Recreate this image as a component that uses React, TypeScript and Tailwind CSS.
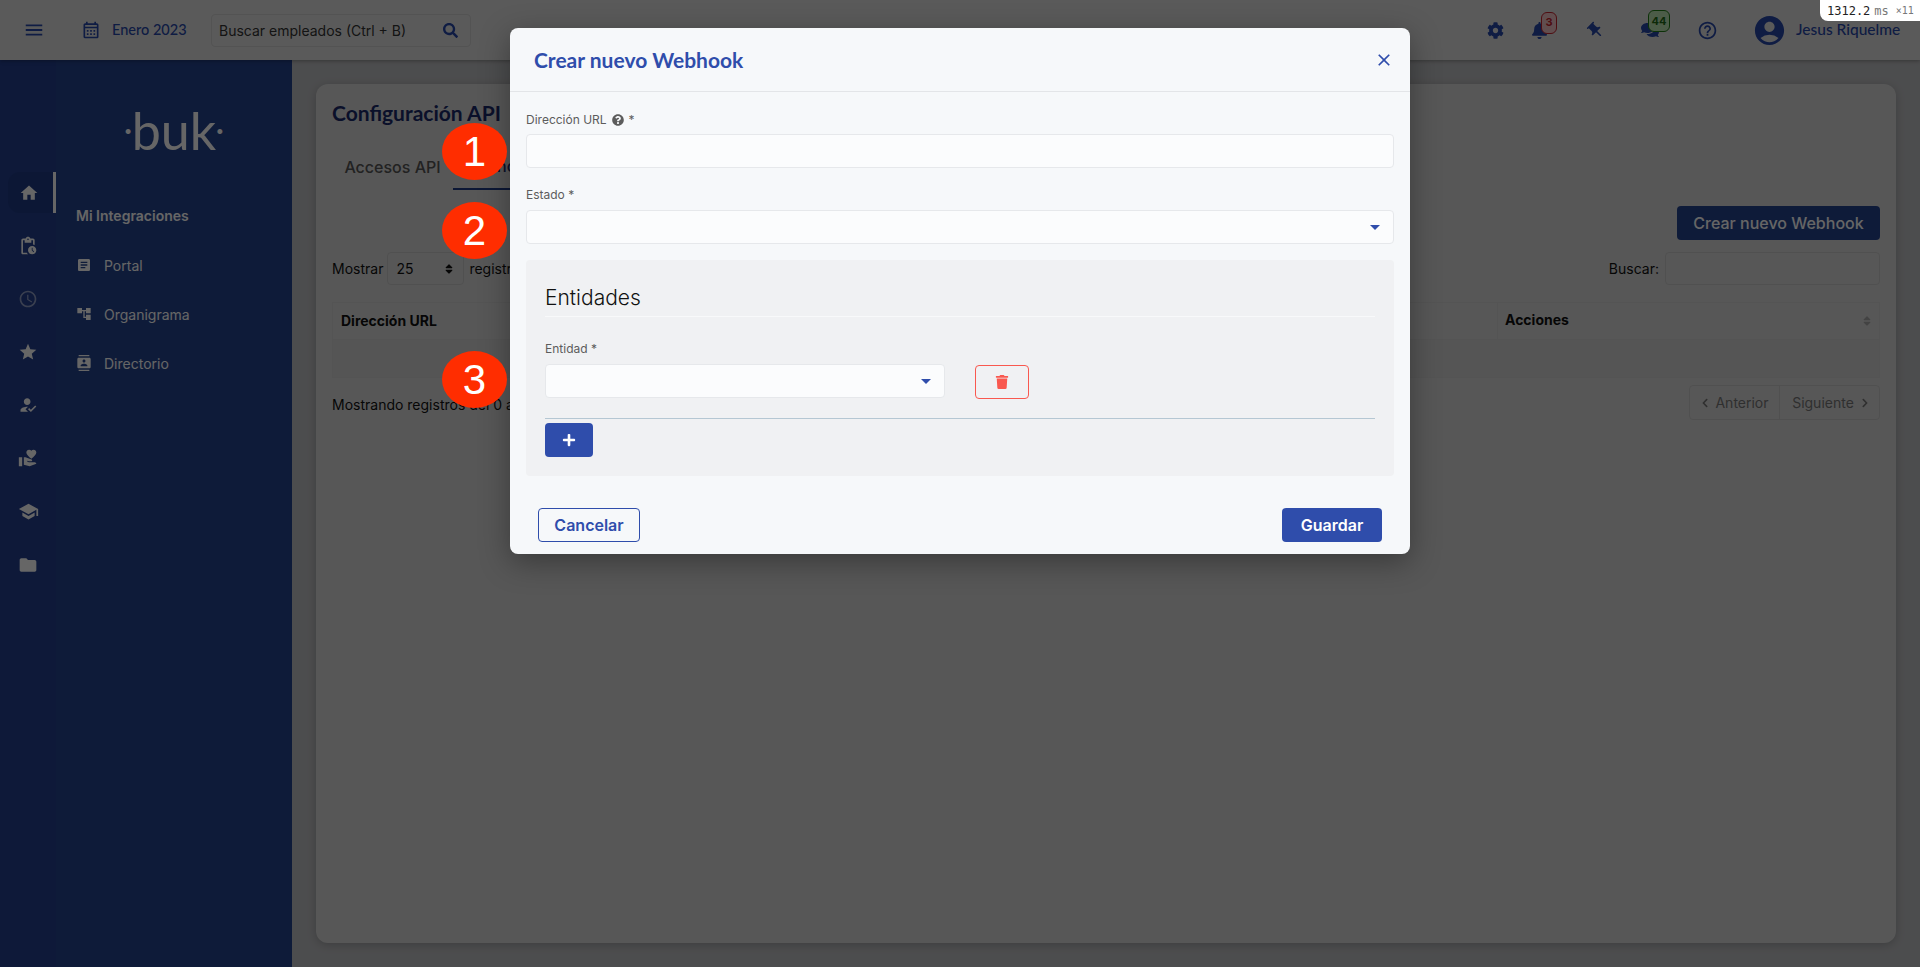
import {
  MdMenu,
  MdOutlineCalendarMonth,
  MdHome,
  MdOutlinePendingActions,
  MdOutlineAccessTime,
  MdStar,
  MdHowToReg,
  MdVolunteerActivism,
  MdSchool,
  MdFolder,
  MdArticle,
  MdAccountTree,
  MdContacts,
  MdPushPin,
  MdOutlineHelpOutline,
  MdAccountCircle,
  MdClose,
} from "react-icons/md";
import {
  FaBell,
  FaChevronLeft,
  FaChevronRight,
  FaCog,
  FaComments,
  FaPlus,
  FaQuestionCircle,
  FaSearch,
  FaSort,
  FaTrash,
} from "react-icons/fa";

const heading = "font-['Lato',sans-serif]";

function Caret() {
  return <span className="h-0 w-0 border-x-[5px] border-t-[5px] border-x-transparent border-t-[#2f4dab]" />;
}

function SelectBox({ className }: { className: string }) {
  return (
    <div className={`flex items-center justify-end rounded border border-[#e6e8eb] bg-[#fbfcfd] pr-[13px] ${className}`}>
      <Caret />
    </div>
  );
}

function Callout({ n, className }: { n: number; className: string }) {
  return (
    <div
      className={`absolute left-[442px] z-30 flex h-[57px] w-[65px] items-center justify-center rounded-[50%] bg-[#ff2d00] font-['Liberation_Sans',sans-serif] text-[42px] text-white ${className}`}
    >
      {n}
    </div>
  );
}

const railIcons = [
  { icon: MdOutlinePendingActions, size: 20, dim: false },
  { icon: MdOutlineAccessTime, size: 20, dim: true },
  { icon: MdStar, size: 20, dim: false },
  { icon: MdHowToReg, size: 20, dim: false },
  { icon: MdVolunteerActivism, size: 20, dim: false },
  { icon: MdSchool, size: 21, dim: false },
  { icon: MdFolder, size: 20, dim: false },
];

const menuItems = [
  { label: "Portal", icon: MdArticle },
  { label: "Organigrama", icon: MdAccountTree },
  { label: "Directorio", icon: MdContacts },
];

export default function App() {
  return (
    <div className="relative flex h-[967px] w-[1920px] flex-col overflow-hidden bg-[#bfc0c3] font-['Inter',sans-serif]">
      {/* top bar */}
      <header className="z-10 flex h-[60px] shrink-0 items-center bg-[#e2e2e2] text-[#2747a8] shadow-[0_1px_4px_rgba(0,0,0,0.3)]">
        <MdMenu size={22} className="ml-[23px]" />
        <MdOutlineCalendarMonth size={20} className="ml-[36px]" />
        <span className={`ml-[11px] w-[75px] whitespace-nowrap text-[14.5px] font-medium ${heading}`}>Enero 2023</span>
        <div className="ml-[24px] flex h-[33px] w-[260px] items-center justify-between rounded border border-[#cfcfcf] pl-[7px] pr-3">
          <span className="text-[14px] text-[#333]">Buscar empleados (Ctrl + B)</span>
          <FaSearch size={15} />
        </div>
        <div className="ml-auto flex items-center pr-[20px]">
          <FaCog size={17} className="mr-[1px]" />
          <div className="relative ml-[26px]">
            <FaBell size={17} />
            <span className="absolute left-[10px] top-[-10px] flex h-[22px] w-[16px] items-center justify-center rounded-md border border-[#c3232d] bg-[#f3c3c6] text-[11px] font-bold text-[#c3232d]">
              3
            </span>
          </div>
          <MdPushPin size={19} className="ml-[38px] rotate-[-45deg]" />
          <div className="relative ml-[36px]">
            <FaComments size={18} />
            <span className="absolute left-[7px] top-[-11px] flex h-[22px] w-[22px] items-center justify-center rounded-md border border-[#1f7a14] bg-[#bfe5b5] text-[11px] font-bold text-[#1f6a14]">
              44
            </span>
          </div>
          <MdOutlineHelpOutline size={21} className="ml-[38px]" />
          <MdAccountCircle size={35} className="ml-[34px]" />
          <span className={`ml-[9px] w-[104px] whitespace-nowrap text-[15.5px] font-medium ${heading}`}>Jesus Riquelme</span>
        </div>
      </header>

      <div className="flex flex-1">
        {/* icon rail */}
        <nav className="flex w-[56px] shrink-0 flex-col items-center bg-[#233f8e] pt-[112px] text-white">
          <div className="relative flex h-[41px] w-[48px] items-center justify-center self-end rounded-l-xl border-r-[3px] border-white bg-[#1f3a85]">
            <MdHome size={20} className="mr-[3px] mt-[1px]" />
          </div>
          <div className="mt-[23px] flex flex-col gap-[33px]">
            {railIcons.map((item, i) => (
              <item.icon key={i} size={item.size} className={item.dim ? "opacity-50" : ""} />
            ))}
          </div>
        </nav>

        {/* menu panel */}
        <aside className="w-[236px] shrink-0 bg-[#25448f] text-white">
          <div className="mt-[45px] flex h-[50px] items-center justify-center font-['Lato',sans-serif] text-[52px] font-normal leading-none">
            <span className="text-[26px] font-bold">·</span>
            buk
            <span className="text-[26px] font-bold">·</span>
          </div>
          <p className="ml-[20px] mt-[51px] text-[14px] font-semibold leading-[20px]">Mi Integraciones</p>
          <ul className="ml-[20px] mt-[28px] flex flex-col gap-[27px]">
            {menuItems.map((item) => (
              <li key={item.label} className="flex h-[22px] items-center gap-[12px] text-[14px]">
                <item.icon size={16} />
                {item.label}
              </li>
            ))}
          </ul>
        </aside>

        {/* main content */}
        <main className="flex flex-1 flex-col p-6">
          <section className="flex-1 rounded-xl bg-[#dadada] px-4 pt-[14px] text-[14px] text-[#111] shadow-[0_2px_10px_rgba(0,0,0,0.2)]">
            <h1 className={`text-[21px] font-bold leading-[30px] text-[#1a2a6a] ${heading}`}>Configuración API</h1>

            <div className="mt-[18px] flex h-[44px] text-[16px] font-medium">
              <div className="flex w-[121px] items-center justify-center pb-[2px] text-[#555]">Accesos API</div>
              <div className="flex w-[100px] items-center justify-center border-b-2 border-[#1f3a85] pb-[2px] text-[#1a2a6a]">
                Webhooks
              </div>
            </div>

            <div className="mt-4 flex justify-end">
              <button className="h-[34px] w-[203px] rounded bg-[#25448f] text-[16px] font-medium text-white">
                Crear nuevo Webhook
              </button>
            </div>

            <div className="mt-3 flex h-[33px] items-center">
              <span>Mostrar</span>
              <div className="ml-[4px] flex h-full w-[77px] items-center justify-between rounded border border-[#c8c8c8] pl-[8px] pr-[8px]">
                25
                <FaSort size={12} />
              </div>
              <span className="ml-[5px]">registros</span>
              <span className="ml-auto">Buscar:</span>
              <div className="ml-[6px] h-full w-[215px] rounded border border-[#c8c8c8]" />
            </div>

            <div className="mt-[17px] border border-[#d2d2d2]">
              <div className="flex h-[36px] items-center font-bold">
                <span className="mb-[2px] ml-[8px]">Dirección URL</span>
                <span className="ml-auto h-full w-[364px] border-l border-[#d2d2d2] pl-[7px] leading-[34px]">Acciones</span>
                <FaSort size={12} className="mr-[6px] shrink-0 text-[#a8a8a8]" />
              </div>
              <div className="h-[38px] border-t border-[#d2d2d2] bg-[#d4d4d4]" />
            </div>

            <div className="mt-[7px] flex h-[35px] items-center">
              <span className="mt-[4px]">Mostrando registros del 0 al 0 de 0</span>
              <div className="ml-auto flex h-full w-[191px] rounded border border-[#c8c8c8] text-[#777]">
                <div className="flex w-[90px] items-center justify-center gap-[5px] border-r border-[#c8c8c8]">
                  <FaChevronLeft size={10} />
                  Anterior
                </div>
                <div className="flex flex-1 items-center justify-center gap-[6px] pl-[3px]">
                  Siguiente
                  <FaChevronRight size={10} />
                </div>
              </div>
            </div>
          </section>
        </main>
      </div>

      {/* backdrop + modal */}
      <div className="absolute inset-0 z-20 flex justify-center bg-black/60">
        <div className="mt-[28px] h-[526px] w-[900px] rounded-lg bg-[#f6f8fa] shadow-[0_8px_30px_rgba(0,0,0,0.35)]">
          <div className="flex h-[64px] items-center justify-between border-b border-[#e3e5e8] pl-[24px] pr-[16px]">
            <h2 className={`text-[21px] font-bold text-[#2f4dab] ${heading}`}>Crear nuevo Webhook</h2>
            <MdClose size={20} className="text-[#2f4dab]" />
          </div>

          <div className="px-4 text-[12px] leading-[16px] text-[#5c5c5c]">
            <label className="mt-[20px] flex h-[16px] items-center">
              Dirección URL
              <FaQuestionCircle size={12} className="ml-[5px] mr-[5px]" />*
            </label>
            <div className="mt-[6px] h-[34px] rounded border border-[#e6e8eb] bg-[#fbfcfd]" />

            <label className="mt-[19px] block">Estado *</label>
            <SelectBox className="mt-[7px] h-[34px]" />

            <div className="mt-[16px] h-[216px] rounded bg-[#f0f1f3] px-[19px]">
              <h3 className="flex h-[57px] items-end border-b border-[#f8f9fa] pb-[4px] text-[21px] font-light leading-[28px] text-[#111]">
                Entidades
              </h3>
              <label className="mt-[24px] block">Entidad *</label>
              <div className="mt-[7px] flex items-start">
                <SelectBox className="h-[34px] w-[400px]" />
                <button className="ml-[30px] mt-[1px] flex h-[34px] w-[54px] items-center justify-center rounded border border-[#f9584f] text-[#f9584f]">
                  <FaTrash size={14} />
                </button>
              </div>
              <div className="mt-[19px] border-t border-[#b5c7d3]" />
              <button className="mt-[4px] flex h-[34px] w-[48px] items-center justify-center rounded bg-[#2f4dab] text-white">
                <FaPlus size={14} />
              </button>
            </div>

            <div className="mt-[32px] flex justify-between px-3 text-[16px] font-semibold">
              <button className="h-[34px] w-[102px] rounded border border-[#2f4dab] text-[#2f4dab]">Cancelar</button>
              <button className="h-[34px] w-[100px] rounded bg-[#2f4dab] text-white">Guardar</button>
            </div>
          </div>
        </div>
      </div>

      <Callout n={1} className="top-[123px]" />
      <Callout n={2} className="top-[202px]" />
      <Callout n={3} className="top-[351px]" />

      {/* perf widget */}
      <div className="absolute right-0 top-0 z-30 flex h-[21px] w-[100px] items-center rounded-bl-lg bg-white pl-[7px] font-['DejaVu_Sans_Mono',monospace] text-[12px] text-[#222]">
        1312.2
        <span className="ml-[4px] text-[#777]">ms</span>
        <span className="ml-[7px] text-[10px] text-[#777]">×11</span>
      </div>
    </div>
  );
}
